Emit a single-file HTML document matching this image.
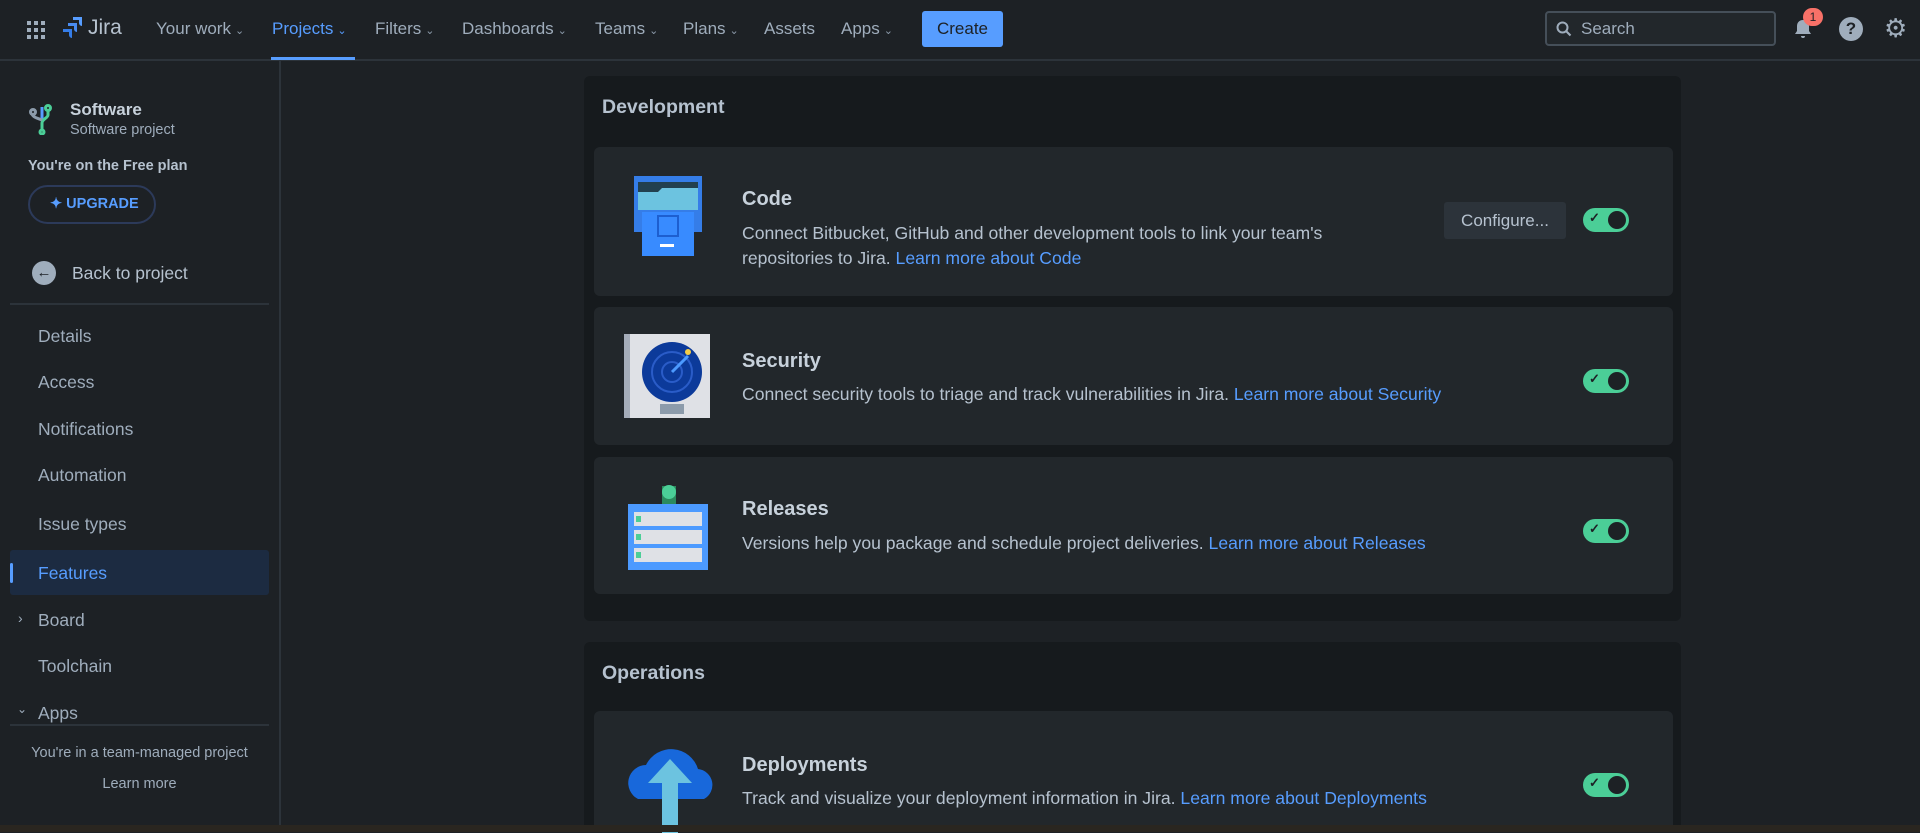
<!DOCTYPE html>
<html><head><meta charset="utf-8"><style>
*{box-sizing:border-box;margin:0;padding:0}
body{width:1920px;height:832px;background:#1d2125;font-family:"Liberation Sans",sans-serif;color:#b6c2cf;overflow:hidden;position:relative}
.a{position:absolute}
.nav{left:0;top:0;width:1920px;height:61px;border-bottom:2px solid #2c333a;background:#1d2125}
.ni{position:absolute;top:19px;font-size:17px;color:#9fadbc}
.ni .c{font-size:11px;margin-left:4px;color:#8c9bab}
.side{left:0;top:61px;width:281px;height:771px;border-right:2px solid #2c333a}
.si{position:absolute;left:38px;font-size:17.5px;color:#9fadbc}
.panel{background:#161a1d;border-radius:6px}
.card{position:absolute;left:594px;width:1079px;background:#22272b;border-radius:6px}
.tt{position:absolute;left:148px;font-size:20px;font-weight:bold;color:#c7d1db}
.ds{position:absolute;left:148px;font-size:17.6px;line-height:25px;color:#b6c2cf}
.ds a{color:#579dff;text-decoration:none}
.tg{position:absolute;left:989px;width:46px;height:24px;border-radius:12px;background:#4bce97}
.tg::after{content:"";position:absolute;right:3px;top:3px;width:18px;height:18px;border-radius:50%;background:#1d2125}
.tg span{position:absolute;left:6px;top:2px;font-size:13px;color:#1d2125;font-weight:bold}
</style></head><body>
<div class="a nav">
 <svg class="a" style="left:26px;top:20px" width="20" height="20" viewBox="0 0 20 20" fill="#9fadbc"><rect x="1" y="1" width="4" height="4"/><rect x="8" y="1" width="4" height="4"/><rect x="15" y="1" width="4" height="4"/><rect x="1" y="8" width="4" height="4"/><rect x="8" y="8" width="4" height="4"/><rect x="15" y="8" width="4" height="4"/><rect x="1" y="15" width="4" height="4"/><rect x="8" y="15" width="4" height="4"/><rect x="15" y="15" width="4" height="4"/></svg>
 <svg class="a" style="left:61px;top:17px" width="22" height="24" viewBox="0 0 22 24"><path d="M12 0h9v9a3 3 0 0 1-3-3V3h-6z" fill="#579dff"/><path d="M7 6h9v9a3 3 0 0 1-3-3V9H7z" fill="#4a8cf0"/><path d="M2 12h9v9a3 3 0 0 1-3-3v-3H2z" fill="#357de8"/></svg>
 <div class="ni" style="left:88px;top:16px;font-size:21px;color:#b6c2cf">Jira</div>
 <div class="ni" style="left:156px">Your work<span class="c">⌄</span></div>
 <div class="ni" style="left:272px;color:#579dff">Projects<span class="c" style="color:#579dff">⌄</span></div>
 <div class="a" style="left:271px;top:57px;width:84px;height:3px;background:#579dff"></div>
 <div class="ni" style="left:375px">Filters<span class="c">⌄</span></div>
 <div class="ni" style="left:462px">Dashboards<span class="c">⌄</span></div>
 <div class="ni" style="left:595px">Teams<span class="c">⌄</span></div>
 <div class="ni" style="left:683px">Plans<span class="c">⌄</span></div>
 <div class="ni" style="left:764px">Assets</div>
 <div class="ni" style="left:841px">Apps<span class="c">⌄</span></div>
 <div class="a" style="left:922px;top:11px;width:81px;height:36px;background:#579dff;border-radius:3px;color:#1d2125;font-size:17px;text-align:center;line-height:36px">Create</div>
 <div class="a" style="left:1545px;top:11px;width:231px;height:35px;border:2px solid #454f59;border-radius:4px;background:#22272b"></div>
 <svg class="a" style="left:1556px;top:21px" width="16" height="16" viewBox="0 0 16 16" fill="none" stroke="#9fadbc" stroke-width="2"><circle cx="6.5" cy="6.5" r="5"/><path d="M10.5 10.5l4 4"/></svg>
 <div class="ni" style="left:1581px;top:19px">Search</div>
 <svg class="a" style="left:1792px;top:18px" width="22" height="22" viewBox="0 0 22 22"><path d="M11 2c-4 0-6 3-6 6v5l-2 3h16l-2-3V8c0-3-2-6-6-6zM9 18a2 2 0 0 0 4 0z" fill="#9fadbc"/></svg>
 <div class="a" style="left:1803px;top:8px;width:20px;height:18px;border-radius:9px;background:#f87168;color:#1d2125;font-size:12px;text-align:center;line-height:18px">1</div>
 <div class="a" style="left:1839px;top:17px;width:24px;height:24px;border-radius:50%;background:#9fadbc;color:#1d2125;font-weight:bold;font-size:17px;text-align:center;line-height:24px">?</div>
 <div class="a" style="left:1884px;top:13px;font-size:26px;color:#9fadbc">⚙</div>
</div>
<div class="a side">
 <svg class="a" style="left:28px;top:42px" width="28" height="32" viewBox="0 0 28 32" fill="none" stroke-width="3"><path d="M14 4v14" stroke="#579dff"/><path d="M20 6v6c0 3-6 4-6 8v8" stroke="#4bce97"/><circle cx="20" cy="5" r="2.5" stroke="#4bce97"/><circle cx="14" cy="29" r="2" stroke="#4bce97"/><path d="M4 10c0 4 5 5 10 7" stroke="#8c9bab"/><circle cx="5" cy="9" r="2.5" stroke="#8c9bab"/></svg>
 <div class="a" style="left:70px;top:39px;font-size:17px;font-weight:bold;color:#c7d1db">Software</div>
 <div class="a" style="left:70px;top:61px;font-size:14.5px;color:#9fadbc">Software project</div>
 <div class="a" style="left:28px;top:97px;font-size:14.5px;font-weight:bold;color:#b6c2cf">You're on the Free plan</div>
 <div class="a" style="left:28px;top:124px;width:128px;height:39px;border:2px solid #2c3a5a;border-radius:20px;color:#579dff;font-size:14.5px;font-weight:bold;line-height:35px;padding-left:20px">✦ UPGRADE</div>
 <div class="a" style="left:32px;top:200px;width:24px;height:24px;border-radius:50%;background:#9fadbc;color:#1d2125;font-size:15px;text-align:center;line-height:24px;font-weight:bold">←</div>
 <div class="si" style="left:72px;top:202px;color:#b6c2cf">Back to project</div>
 <div class="a" style="left:10px;top:242px;width:259px;height:2px;background:#2c333a"></div>
 <div class="si" style="top:265px">Details</div>
 <div class="si" style="top:311px">Access</div>
 <div class="si" style="top:358px">Notifications</div>
 <div class="si" style="top:404px">Automation</div>
 <div class="si" style="top:453px">Issue types</div>
 <div class="a" style="left:10px;top:489px;width:259px;height:45px;background:#1c2b41;border-radius:3px"></div>
 <div class="a" style="left:10px;top:502px;width:3px;height:20px;background:#579dff;border-radius:2px"></div>
 <div class="si" style="top:502px;color:#579dff">Features</div>
 <div class="si" style="left:18px;top:549px;font-size:14px">›</div>
 <div class="si" style="top:549px">Board</div>
 <div class="si" style="top:595px">Toolchain</div>
 <div class="si" style="left:17px;top:641px;font-size:12px">⌄</div>
 <div class="si" style="top:642px">Apps</div>
 <div class="a" style="left:10px;top:663px;width:259px;height:2px;background:#2c333a"></div>
 <div class="a" style="left:0;top:684px;width:279px;text-align:center;font-size:14.5px;color:#9fadbc">You're in a team-managed project</div>
 <div class="a" style="left:0;top:715px;width:279px;text-align:center;font-size:14.5px;color:#9fadbc">Learn more</div>
</div>
<div class="a panel" style="left:584px;top:76px;width:1097px;height:545px"></div>
<div class="a" style="left:602px;top:96px;font-size:19.5px;font-weight:bold;color:#b6c2cf">Development</div>
<div class="card" style="top:147px;height:149px">
 <svg class="a" style="left:38px;top:29px" width="72" height="80" viewBox="0 0 72 80"><rect x="2" y="0" width="68" height="56" fill="#357de8"/><rect x="6" y="6" width="60" height="28" fill="#22404f"/><path d="M6 16h20l4-4h36v22H6z" fill="#6cc3e0"/><rect x="10" y="36" width="52" height="44" fill="#388bff"/><rect x="26" y="40" width="20" height="20" fill="none" stroke="#1d5fd0" stroke-width="2"/><rect x="28" y="68" width="14" height="3" fill="#fff"/></svg>
 <div class="tt" style="top:41px">Code</div>
 <div class="ds" style="top:74px">Connect Bitbucket, GitHub and other development tools to link your team's<br>repositories to Jira. <a>Learn more about Code</a></div>
 <div class="a" style="left:850px;top:55px;width:122px;height:37px;background:#2c333a;border-radius:3px;font-size:17px;color:#b6c2cf;text-align:center;line-height:37px">Configure...</div>
 <div class="tg" style="top:61px"><span>✓</span></div>
</div>
<div class="card" style="top:307px;height:138px">
 <svg class="a" style="left:30px;top:27px" width="86" height="84" viewBox="0 0 86 84"><rect width="86" height="84" fill="#dfe1e6"/><rect width="6" height="84" fill="#a5adba"/><circle cx="48" cy="38" r="30" fill="#0c3a9a"/><circle cx="48" cy="38" r="20" fill="none" stroke="#2a5cc8" stroke-width="2"/><circle cx="48" cy="38" r="10" fill="none" stroke="#2a5cc8" stroke-width="2"/><path d="M48 38l16-16" stroke="#4c9aff" stroke-width="3"/><circle cx="64" cy="18" r="3" fill="#f5cd47"/><rect x="36" y="70" width="24" height="10" fill="#8c9bab"/></svg>
 <div class="tt" style="top:43px">Security</div>
 <div class="ds" style="top:75px">Connect security tools to triage and track vulnerabilities in Jira. <a>Learn more about Security</a></div>
 <div class="tg" style="top:62px"><span>✓</span></div>
</div>
<div class="card" style="top:457px;height:137px">
 <svg class="a" style="left:32px;top:25px" width="82" height="88" viewBox="0 0 82 88"><rect x="36" y="4" width="14" height="18" fill="#2b8a5e"/><circle cx="43" cy="10" r="7" fill="#4bce97"/><rect x="2" y="22" width="80" height="66" fill="#4c9aff"/><rect x="8" y="30" width="68" height="14" fill="#dfe1e6"/><rect x="8" y="48" width="68" height="14" fill="#dfe1e6"/><rect x="8" y="66" width="68" height="14" fill="#dfe1e6"/><rect x="10" y="34" width="5" height="6" fill="#4bce97"/><rect x="10" y="52" width="5" height="6" fill="#4bce97"/><rect x="10" y="70" width="5" height="6" fill="#4bce97"/></svg>
 <div class="tt" style="top:41px">Releases</div>
 <div class="ds" style="top:74px">Versions help you package and schedule project deliveries. <a>Learn more about Releases</a></div>
 <div class="tg" style="top:62px"><span>✓</span></div>
</div>
<div class="a panel" style="left:584px;top:642px;width:1097px;height:190px"></div>
<div class="a" style="left:602px;top:662px;font-size:19.5px;font-weight:bold;color:#b6c2cf">Operations</div>
<div class="card" style="top:711px;height:121px">
 <svg class="a" style="left:24px;top:28px" width="106" height="94" viewBox="0 0 106 94"><path d="M20 60a18 18 0 0 1 8-34 28 28 0 0 1 52 4 16 16 0 0 1 6 30z" fill="#1868db"/><path d="M52 20l22 24H60v50H44V44H30z" fill="#6cc3e0"/></svg>
 <div class="tt" style="top:43px">Deployments</div>
 <div class="ds" style="top:75px">Track and visualize your deployment information in Jira. <a>Learn more about Deployments</a></div>
 <div class="tg" style="top:62px"><span>✓</span></div>
</div>
<div class="a" style="left:0;top:825px;width:1920px;height:7px;background:#2a2620"></div>
</body></html>
